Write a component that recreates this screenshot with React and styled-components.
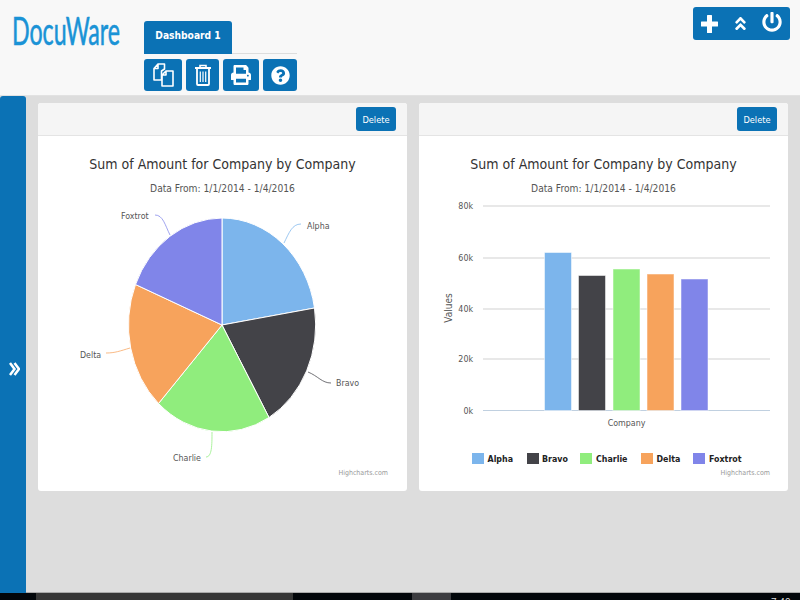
import React from 'react';
import styled, {createGlobalStyle} from 'styled-components';
import {
    FaPrint,
    FaQuestionCircle,
    FaAngleDoubleUp,
    FaPowerOff
} from 'react-icons/fa';

const BLUE = '#0b72b5';
const CHART_FONT = '"DejaVu Sans Condensed", "DejaVu Sans", sans-serif';

const GlobalStyle = createGlobalStyle`
  html, body {
    margin: 0;
    padding: 0;
    background: #ddd;
  }
`;

const Page = styled.div`
  width: 800px;
  height: 600px;
  display: flex;
  flex-direction: column;
  overflow: hidden;
  font-family: ${CHART_FONT};
`;

const Header = styled.header`
  height: 95px;
  flex: none;
  display: flex;
  background: #f8f8f8;
  border-bottom: 1px solid #e2e2e2;
`;

const LogoBox = styled.div`
  width: 144px;
  flex: none;
  padding: 8px 0 0 12px;
  box-sizing: border-box;
`;

const Logo = styled.span`
  display: inline-block;
  font-family: "Lato", sans-serif;
  font-size: 38px;
  line-height: 44px;
  color: #1a93d6;
  -webkit-text-stroke: 0.6px #1a93d6;
  transform: scaleX(0.61);
  transform-origin: left center;
  white-space: nowrap;
`;

const TabColumn = styled.div`
  width: 153px;
  flex: none;
  padding-top: 21px;
`;

const TabRow = styled.div`
  height: 32px;
  border-bottom: 1px solid #ddd;
`;

const Tab = styled.div`
  width: 88px;
  height: 33px;
  box-sizing: border-box;
  padding-top: 9px;
  text-align: center;
  background: ${BLUE};
  border-radius: 3px 3px 0 0;
  color: #fff;
  font-weight: 700;
  font-size: 10.2px;
`;

const ToolRow = styled.div`
  display: flex;
  justify-content: space-between;
  margin-top: 5px;
`;

const ToolButton = styled.button`
  width: ${props => props.$width}px;
  height: 32px;
  padding: 0;
  display: flex;
  align-items: center;
  justify-content: center;
  background: ${BLUE};
  border: 0;
  border-radius: 3px;
  color: #fff;
  font-size: ${props => props.$size || 20}px;
`;

const ActionBar = styled.div`
  width: 97px;
  height: 33px;
  margin: 7px 10px 0 auto;
  display: flex;
  align-items: center;
  justify-content: space-between;
  padding: 0 8px;
  box-sizing: border-box;
  background: ${BLUE};
  border-radius: 3px;
  color: #fff;
`;

const ActionIcon = styled.span`
  display: flex;
  margin-bottom: ${props => props.$lift || 0}px;
  font-size: ${props => props.$size}px;
`;

const Main = styled.main`
  flex: 1;
  display: flex;
  min-height: 0;
`;

const Sidebar = styled.aside`
  width: 26px;
  flex: none;
  display: flex;
  align-items: center;
  justify-content: center;
  padding: 48px 0 0 3px;
  box-sizing: border-box;
  background: ${BLUE};
  border-radius: 3px 3px 0 0;
`;

const Content = styled.div`
  flex: 1;
  display: flex;
  align-items: flex-start;
  gap: 12px;
  padding: 7px 12px;
  border-bottom: 1px solid #aaa;
`;

const Card = styled.section`
  width: 369px;
  height: 388px;
  display: flex;
  flex-direction: column;
  background: #fff;
  border-radius: 3px;
`;

const CardHead = styled.div`
  height: 33px;
  flex: none;
  display: flex;
  align-items: flex-start;
  justify-content: flex-end;
  padding: 4px 11px 0 0;
  box-sizing: border-box;
  background: #f5f5f5;
  border-bottom: 1px solid #e4e4e4;
  border-radius: 3px 3px 0 0;
`;

const DeleteButton = styled.button`
  width: 40px;
  height: 24px;
  padding: 0;
  background: ${BLUE};
  border: 0;
  border-radius: 3px;
  color: #fff;
  font-family: ${CHART_FONT};
  font-size: 9.2px;
`;

const ChartTitle = styled.h2`
  margin: 18px 0 0;
  height: 20px;
  text-align: center;
  font-family: ${CHART_FONT};
  font-weight: 400;
  font-size: 14px;
  line-height: 20px;
  color: #333;
`;

const ChartSubtitle = styled.div`
  margin-top: 8px;
  height: 14px;
  text-align: center;
  font-size: 10.2px;
  line-height: 14px;
  color: #555;
`;

const ChartSvg = styled.svg`
  display: block;
  flex: none;
  width: 369px;
  height: 295px;
`;

const Label = styled.text`
  font-family: ${CHART_FONT};
  font-size: 8.8px;
  fill: ${props => props.$fill || '#555'};
  font-weight: ${props => props.$bold ? 700 : 400};
`;

const AxisTitle = styled(Label)`
  font-size: 10px;
`;

const Credits = styled.text`
  font-family: ${CHART_FONT};
  font-size: 7px;
  fill: #999;
`;

const Taskbar = styled.footer`
  height: 7px;
  flex: none;
  position: relative;
  display: flex;
  background: #02060a;
  overflow: hidden;
`;

const TaskItem = styled.div`
  width: ${props => props.$width}px;
  margin-left: ${props => props.$left}px;
  background: ${props => props.$color};
`;

const Clock = styled.span`
  position: absolute;
  left: 771px;
  top: 4px;
  color: #ddd;
  font-family: "Liberation Sans", sans-serif;
  font-size: 10px;
  line-height: 12px;
`;

const series = [
    {name: 'Alpha', color: '#7cb5ec', x: 544.5, top: 252.5, swatch: 472, text: 487.5},
    {name: 'Bravo', color: '#434348', x: 578.5, top: 275.5, swatch: 527, text: 542},
    {name: 'Charlie', color: '#90ed7d', x: 613, top: 269, swatch: 580, text: 596},
    {name: 'Delta', color: '#f7a35c', x: 647, top: 274, swatch: 641, text: 656.5},
    {name: 'Foxtrot', color: '#8085e9', x: 681, top: 279, swatch: 693, text: 709}
];

const slices = [
    {color: series[0].color, from: '222 218', to: '314.5 308'},
    {color: series[1].color, from: '314.5 308', to: '269 417.5'},
    {color: series[2].color, from: '269 417.5', to: '158.5 403.5'},
    {color: series[3].color, from: '158.5 403.5', to: '135.5 284.5'},
    {color: series[4].color, from: '135.5 284.5', to: '222 218'}
];

const connectors = [
    {color: series[0].color, d: 'M284 243 C289 233 292 224 301 224', label: 'Alpha', x: 307, y: 229},
    {color: series[1].color, d: 'M308 372 C318 376 322 383 331 383', label: 'Bravo', x: 336, y: 386},
    {color: series[2].color, d: 'M212 432 C212 445 212 457 206 457', label: 'Charlie', x: 173, y: 461},
    {color: series[3].color, d: 'M130 348 C120 351 115 353 106 353', label: 'Delta', x: 80, y: 358},
    {color: series[4].color, d: 'M170 235 C165 225 163 215 155 215', label: 'Foxtrot', x: 121, y: 219}
];

const gridLines = [
    {y: 206, label: '80k'},
    {y: 258, label: '60k'},
    {y: 309, label: '40k'},
    {y: 359, label: '20k'}
];

const CopyIcon = () => (
    <svg width="21" height="24" viewBox="0 0 21 24" fill="none" stroke="#fff" strokeWidth="1.6" strokeLinejoin="round">
        <path d="M5 1 H11.5 V6 L8.5 8 V17 H1 V5.5 Z M5 1 V5.5 H1"/>
        <path d="M13 8 H20 V23 H9 V12 Z M13 8 V12 H9"/>
    </svg>
);

const TrashIcon = () => (
    <svg width="16" height="22" viewBox="0 0 16 22" fill="none" stroke="#fff">
        <path d="M5 4 V1.5 H11 V4" strokeWidth="1.6"/>
        <path d="M0 4 H16" strokeWidth="2"/>
        <path d="M2 5 V20 Q2 21 3 21 H13 Q14 21 14 20 V5" strokeWidth="1.8"/>
        <path d="M5.3 7.5 V18 M8 7.5 V18 M10.7 7.5 V18" strokeWidth="1.2"/>
    </svg>
);

const PlusIcon = () => (
    <svg width="17" height="18" viewBox="0 0 17 18" fill="#fff">
        <rect x="6" y="0" width="5" height="18" rx="0.5"/>
        <rect x="0" y="6.5" width="17" height="5" rx="0.5"/>
    </svg>
);

const ExpandIcon = () => (
    <svg width="11" height="14" viewBox="0 0 11 14" fill="none" stroke="#fff" strokeWidth="2.5">
        <path d="M1 1 L5.5 7 L1 13"/>
        <path d="M5.5 1 L10 7 L5.5 13"/>
    </svg>
);

const PieChart = () => (
    <ChartSvg viewBox="38 196 369 295">
        {slices.map(slice => (
            <path
                key={slice.color}
                d={`M222 325 L${slice.from} A94 107 0 0 1 ${slice.to} Z`}
                fill={slice.color}
                stroke="#fff"
                strokeWidth="1"
                strokeLinejoin="round"
            />
        ))}
        {connectors.map(item => (
            <g key={item.label}>
                <path d={item.d} fill="none" stroke={item.color} strokeOpacity="0.75" strokeWidth="1"/>
                <Label x={item.x} y={item.y}>{item.label}</Label>
            </g>
        ))}
        <Credits x="388" y="475" textAnchor="end">Highcharts.com</Credits>
    </ChartSvg>
);

const BarChart = () => (
    <ChartSvg viewBox="419 196 369 295">
        {gridLines.map(line => (
            <g key={line.y}>
                <line x1="483" x2="770" y1={line.y} y2={line.y} stroke="#e0e0e0" strokeWidth="1.3"/>
                <Label x="473" y={line.y + 3} textAnchor="end">{line.label}</Label>
            </g>
        ))}
        <Label x="473" y="413.5" textAnchor="end">0k</Label>
        <line x1="483" x2="770" y1="410.5" y2="410.5" stroke="#c0d0e0" strokeWidth="1"/>
        {series.map(item => (
            <rect
                key={item.name}
                x={item.x}
                y={item.top}
                width="27"
                height={410.5 - item.top}
                fill={item.color}
                stroke="#fff"
                strokeOpacity="0.5"
                strokeWidth="1"
            />
        ))}
        <AxisTitle x="452" y="308" textAnchor="middle" transform="rotate(-90 452 308)">Values</AxisTitle>
        <Label x="626.5" y="426" textAnchor="middle">Company</Label>
        {series.map(item => (
            <g key={item.name}>
                <rect x={item.swatch} y="453" width="12" height="11" fill={item.color}/>
                <Label x={item.text} y="462" $bold $fill="#222">{item.name}</Label>
            </g>
        ))}
        <Credits x="770" y="475" textAnchor="end">Highcharts.com</Credits>
    </ChartSvg>
);

const ChartCard = ({children}) => (
    <Card>
        <CardHead>
            <DeleteButton>Delete</DeleteButton>
        </CardHead>
        <ChartTitle>Sum of Amount for Company by Company</ChartTitle>
        <ChartSubtitle>Data From: 1/1/2014 - 1/4/2016</ChartSubtitle>
        {children}
    </Card>
);

const App = () => (
    <Page>
        <GlobalStyle/>
        <Header>
            <LogoBox>
                <Logo>DocuWare</Logo>
            </LogoBox>
            <TabColumn>
                <TabRow>
                    <Tab>Dashboard 1</Tab>
                </TabRow>
                <ToolRow>
                    <ToolButton $width={38}><CopyIcon/></ToolButton>
                    <ToolButton $width={33}><TrashIcon/></ToolButton>
                    <ToolButton $width={36}><FaPrint/></ToolButton>
                    <ToolButton $width={34} $size={19}><FaQuestionCircle/></ToolButton>
                </ToolRow>
            </TabColumn>
            <ActionBar>
                <PlusIcon/>
                <ActionIcon $size={17}><FaAngleDoubleUp/></ActionIcon>
                <ActionIcon $size={20} $lift={3}><FaPowerOff/></ActionIcon>
            </ActionBar>
        </Header>
        <Main>
            <Sidebar><ExpandIcon/></Sidebar>
            <Content>
                <ChartCard><PieChart/></ChartCard>
                <ChartCard><BarChart/></ChartCard>
            </Content>
        </Main>
        <Taskbar>
            <TaskItem $left={36} $width={257} $color="#363636"/>
            <TaskItem $left={119} $width={39} $color="#3c3c40"/>
            <Clock>7:40 AM</Clock>
        </Taskbar>
    </Page>
);

export default App;
